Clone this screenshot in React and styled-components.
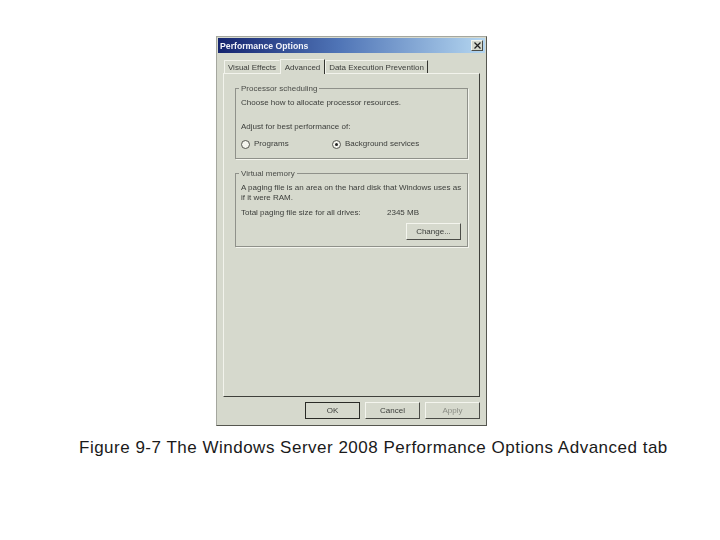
import React from "react";
import styled, { createGlobalStyle } from "styled-components";

const Global = createGlobalStyle`
  html, body { margin: 0; padding: 0; background: #fff; }
  body { font-family: "Liberation Sans", Arial, sans-serif; }
`;
const Page = styled.div`
  width: 720px; height: 540px; overflow: hidden; display: flex; flex-direction: column;
  padding: 36px 0 0 216px; box-sizing: border-box;
`;
const Win = styled.div`
  width: 271px; height: 390px; box-sizing: border-box; background: #d6d9cd;
  border: 1px solid #a5a79f; border-right-color: #55564f; border-bottom-color: #55564f;
  padding: 1px; display: flex; flex-direction: column;
  font-family: "Liberation Sans", sans-serif; font-size: 8px; color: #3b3d3a;
  filter: blur(0.4px);
`;
const TitleBar = styled.div`
  height: 15px; flex: none; display: flex; align-items: center; justify-content: space-between;
  padding: 0 2px 0 2px;
  background: linear-gradient(90deg, #15246e 0%, #4f74b6 45%, #b4d6f0 100%);
`;
const TitleText = styled.span`
  color: #f2f4fa; font-weight: 700; font-size: 8.7px; font-family: "Liberation Sans", sans-serif;
`;
const CloseBtn = styled.div`
  width: 12px; height: 11px; background: #d6d9cd; display: flex; align-items: center; justify-content: center;
  border: 1px solid; border-color: #f4f5ee #4b4c47 #4b4c47 #f4f5ee; box-sizing: border-box;
`;
const Body = styled.div`
  flex: 1; display: flex; flex-direction: column; padding: 5px 5px 0 5px; min-height: 0;
`;
const Tabs = styled.div`
  display: flex; align-items: flex-end; height: 15px; flex: none; padding-left: 1px; position: relative; z-index: 1;
`;
const Tab = styled.div`
  box-sizing: border-box; height: ${p => (p.$active ? 15 : 13)}px; width: ${p => p.$w}px;
  display: flex; align-items: center; justify-content: center; white-space: nowrap;
  margin-bottom: ${p => (p.$active ? -1 : 0)}px;
  background: #d6d9cd;
  border-top: 1px solid #f2f3ec; border-left: 1px solid #f2f3ec;
  border-right: 1px solid ${p => (p.$dark ? "#33342f" : "#d6d9cd")};
`;
const Panel = styled.div`
  flex: 1; box-sizing: border-box; border: 1px solid; border-color: #f2f3ec #3f403b #3f403b #f2f3ec;
  padding: 10px 11px 0 11px; display: flex; flex-direction: column; gap: 10px; min-height: 0;
`;
const Group = styled.fieldset`
  margin: 0; box-sizing: border-box; height: ${p => p.$h}px; padding: 0 5px;
  border: 1px solid #8f918a; box-shadow: 1px 1px 0 #f4f5ee;
  display: flex; flex-direction: column; min-width: 0;
`;
const Legend = styled.legend`
  padding: 0 2px; margin-left: -2px; font-size: 8px; line-height: 9px; color: #4a4c48;
`;
const Line = styled.div`
  line-height: 10px; margin-top: ${p => p.$mt || 0}px; white-space: nowrap;
`;
const Radios = styled.div`
  display: grid; grid-template-columns: 91px 1fr; margin-top: 7px;
`;
const RadioItem = styled.div`
  display: flex; align-items: center; gap: 4px; line-height: 10px;
`;
const RadioDot = styled.span`
  width: 7px; height: 7px; border-radius: 50%; background: #f4f5ee; border: 1px solid #55564f;
  display: inline-flex; align-items: center; justify-content: center; flex: none;
  &::after { content: ""; width: 3px; height: 3px; border-radius: 50%; background: ${p => (p.$on ? "#222" : "transparent")}; }
`;
const SizeRow = styled.div`
  display: grid; grid-template-columns: 146px 1fr; margin-top: 5px; line-height: 10px;
`;
const ChangeRow = styled.div`
  display: flex; justify-content: flex-end; margin-top: 5px; padding-right: 1px;
`;
const Btn = styled.div`
  box-sizing: border-box; width: ${p => p.$w}px; height: ${p => p.$h || 17}px;
  display: flex; align-items: center; justify-content: center; background: #d6d9cd;
  border: 1px solid; color: ${p => (p.$off ? "#8b8d85" : "#3b3d3a")};
  border-color: ${p => (p.$def ? "#2a2b27" : "#f4f5ee #4b4c47 #4b4c47 #f4f5ee")};
`;
const Footer = styled.div`
  height: 27px; flex: none; display: flex; align-items: center; justify-content: flex-end; gap: 5px; padding-right: 0;
`;
const Caption = styled.div`
  margin: 13px 0 0 -137px; font-size: 17px; letter-spacing: 0.5px; line-height: 18px; color: #1a1a1a; white-space: nowrap;
`;

export default function App() {
  return (
    <Page>
      <Global />
      <Win>
        <TitleBar>
          <TitleText>Performance Options</TitleText>
          <CloseBtn>
            <svg width="7" height="7" viewBox="0 0 7 7"><path d="M0.5 0.5L6.5 6.5M6.5 0.5L0.5 6.5" stroke="#222" strokeWidth="1.3" /></svg>
          </CloseBtn>
        </TitleBar>
        <Body>
          <Tabs>
            <Tab $w={56}>Visual Effects</Tab>
            <Tab $w={45} $active $dark>Advanced</Tab>
            <Tab $w={103} $dark>Data Execution Prevention</Tab>
          </Tabs>
          <Panel>
            <Group $h={75}>
              <Legend>Processor scheduling</Legend>
              <Line $mt={5}>Choose how to allocate processor resources.</Line>
              <Line $mt={14}>Adjust for best performance of:</Line>
              <Radios>
                <RadioItem><RadioDot />Programs</RadioItem>
                <RadioItem><RadioDot $on />Background services</RadioItem>
              </Radios>
            </Group>
            <Group $h={78}>
              <Legend>Virtual memory</Legend>
              <Line $mt={5}>A paging file is an area on the hard disk that Windows uses as</Line>
              <Line>if it were RAM.</Line>
              <SizeRow><span>Total paging file size for all drives:</span><span>2345 MB</span></SizeRow>
              <ChangeRow><Btn $w={55}>Change...</Btn></ChangeRow>
            </Group>
          </Panel>
          <Footer>
            <Btn $w={55} $def>OK</Btn>
            <Btn $w={55}>Cancel</Btn>
            <Btn $w={55} $off>Apply</Btn>
          </Footer>
        </Body>
      </Win>
      <Caption>Figure 9-7 The Windows Server 2008 Performance Options Advanced tab</Caption>
    </Page>
  );
}
